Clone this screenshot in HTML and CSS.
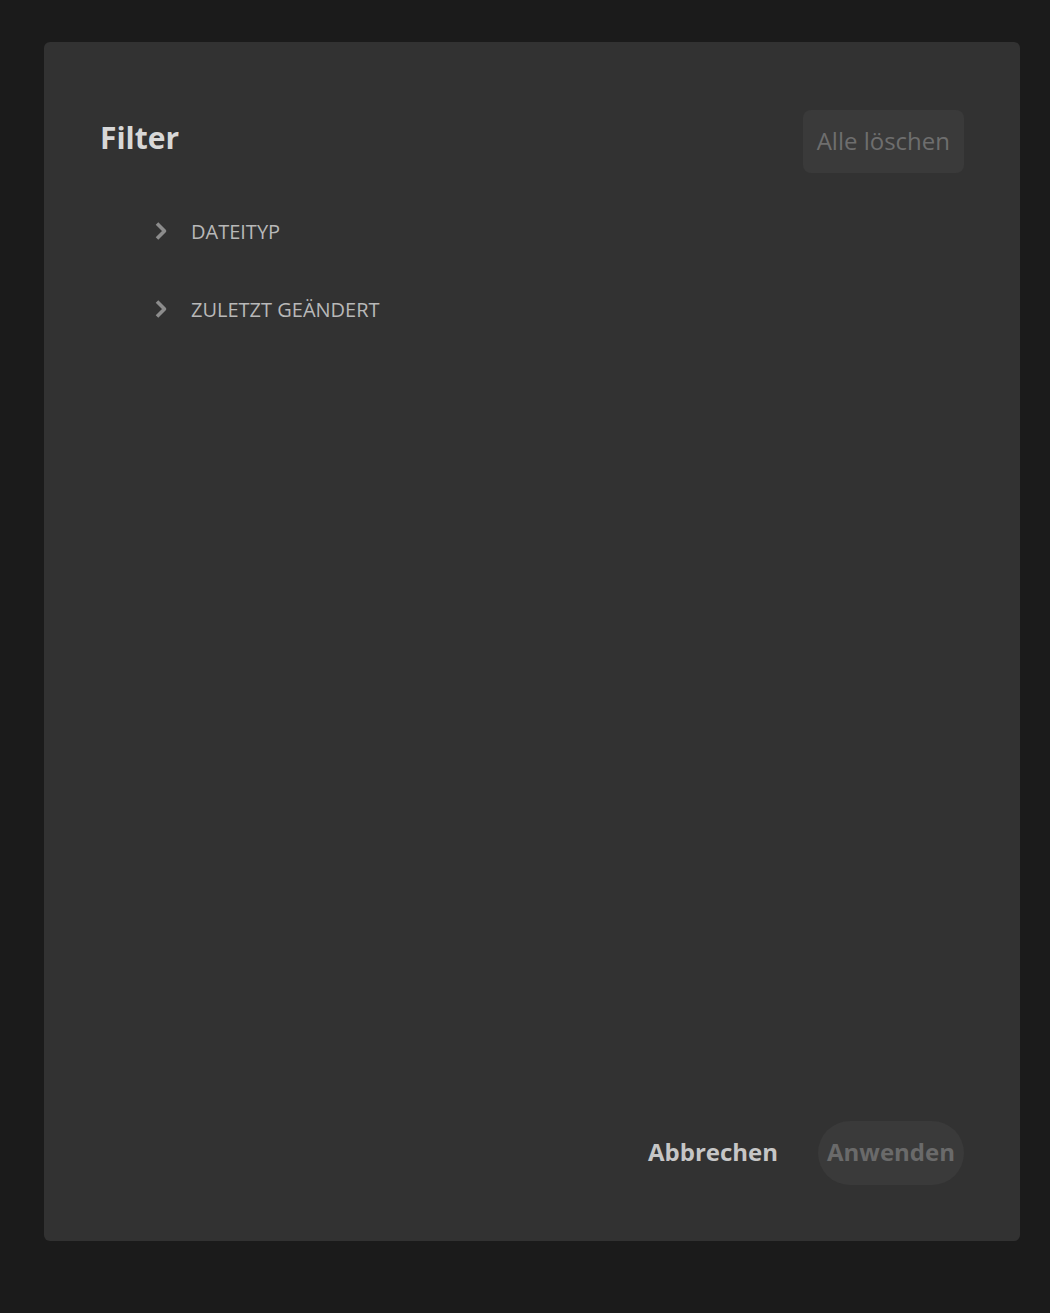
FILE: index.html
```html
<!DOCTYPE html>
<html lang="de">
<head>
    <meta charset="UTF-8">
    <meta name="viewport" content="width=device-width, initial-scale=1.0">
    <title>Filter</title>
    <link rel="stylesheet" href="styles.css">
</head>
<body>
    <div class="dialog">
        <div class="head">
            <h1>Filter</h1>
            <button class="clear">Alle löschen</button>
        </div>
        <div class="groups">
            <div class="group">
                <svg class="chev" viewBox="0 0 16 22" width="16" height="22"><path d="M4 3.5 L11.5 11 L4 18.5" fill="none" stroke="currentColor" stroke-width="3.6" stroke-linejoin="round"/></svg>
                <span>DATEITYP</span>
            </div>
            <div class="group">
                <svg class="chev" viewBox="0 0 16 22" width="16" height="22"><path d="M4 3.5 L11.5 11 L4 18.5" fill="none" stroke="currentColor" stroke-width="3.6" stroke-linejoin="round"/></svg>
                <span>ZULETZT GEÄNDERT</span>
            </div>
        </div>
        <div class="foot">
            <button class="cancel">Abbrechen</button>
            <button class="apply">Anwenden</button>
        </div>
    </div>
</body>
</html>
```

FILE: styles.css
```css
*{
    margin: 0;
    padding: 0;
    box-sizing: border-box;
}
body{
    background-color: #1b1b1b;
    font-family: "Open Sans", "Noto Sans", sans-serif;
    padding: 42px 30px 0 44px;
}
.dialog{
    width: 976px;
    height: 1199px;
    background-color: #323232;
    border-radius: 6px;
    padding: 68px 56px 56px 56px;
    display: flex;
    flex-direction: column;
}
.head{
    display: flex;
    justify-content: space-between;
    align-items: center;
}
h1{
    font-size: 30px;
    font-weight: 700;
    color: #d8d8d8;
    margin-top: -8px;
}
.clear{
    height: 63px;
    padding: 0 14px 2px 14px;
    border: none;
    border-radius: 8px;
    background-color: #3a3a3a;
    color: #6e6e6e;
    font-family: inherit;
    font-size: 24px;
}
.groups{
    margin-top: 39px;
    padding-left: 53px;
    display: flex;
    flex-direction: column;
    gap: 40px;
}
.group{
    display: flex;
    align-items: center;
    gap: 22px;
    height: 38px;
    color: #b8b8b8;
    font-size: 20px;
}
.chev{
    color: #8c8c8c;
}
.foot{
    margin-top: auto;
    display: flex;
    justify-content: flex-end;
    align-items: center;
    gap: 40px;
}
.foot button{
    border: none;
    font-family: inherit;
    font-size: 24px;
    font-weight: 700;
    background: none;
    padding-bottom: 4px;
}
.cancel{
    color: #c6c6c6;
}
.apply{
    height: 64px;
    padding: 0 9px;
    border-radius: 32px;
    background-color: #3a3a3a !important;
    color: #6a6a6a;
}
```
